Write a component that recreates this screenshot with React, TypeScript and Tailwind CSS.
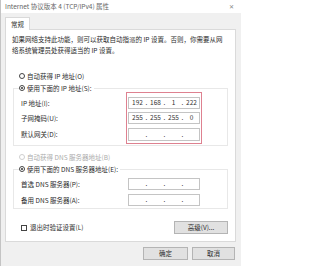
import React from 'react'

type RadioProps = { checked?: boolean; disabled?: boolean }

function Radio({ checked, disabled }: RadioProps) {
  return (
    <span
      className={
        disabled
          ? 'w-[6px] h-[6px] rounded-full border border-[#cfcfcf] bg-white flex items-center justify-center shrink-0'
          : 'w-[6px] h-[6px] rounded-full border border-[#444] bg-white flex items-center justify-center shrink-0'
      }
    >
      {checked && <span className="w-[2px] h-[2px] rounded-full bg-[#333]" />}
    </span>
  )
}

function IpField({ parts, tall }: { parts: string[]; tall?: boolean }) {
  return (
    <div
      className={
        tall
          ? 'h-[13px] w-[72px] border border-[#c4c4c4] bg-white flex items-center pl-[1px]'
          : 'h-[12px] w-[72px] border border-[#c4c4c4] bg-white flex items-center pl-[1px]'
      }
    >
      {parts.map((p, i) => (
        <React.Fragment key={i}>
          <span className="w-[15px] text-center">{p}</span>
          {i < 3 && <span className="w-[3px] text-center">.</span>}
        </React.Fragment>
      ))}
    </div>
  )
}

export default function App() {
  return (
    <div className="w-[241px] h-[266px] bg-[#f0f0f0] border-l border-[#c4c4c4] overflow-hidden text-[6.5px] text-[#2b2b2b] [font-family:'Noto_Sans_CJK_SC',sans-serif] flex flex-col">
      {/* 标题栏 */}
      <div className="h-[13px] bg-white flex items-center justify-between pl-[4px] pr-[7px] shrink-0">
        <span className="text-[#666] leading-none">Internet 协议版本 4 (TCP/IPv4) 属性</span>
        <span className="text-[#888] text-[6px] leading-none">✕</span>
      </div>

      {/* 选项卡 */}
      <div className="pt-[4px] pl-[4px] flex shrink-0">
        <div className="w-[25px] h-[13px] bg-white border border-b-0 border-[#d9d9d9] flex items-center justify-center leading-none -mb-[1px] relative z-10">
          常规
        </div>
      </div>

      <div className="ml-[4px] w-[231px] h-[213px] bg-white border border-[#dadada] shrink-0 flex flex-col">
        <p className="pt-[4px] pl-[6px] pr-[8px] leading-[11px]">
          如果网络支持此功能，则可以获取自动指派的 IP 设置。否则，你需要从网络系统管理员处获得适当的 IP 设置。
        </p>

        <label className="mt-[14px] ml-[13px] h-[12px] flex items-center gap-[2px] leading-none">
          <Radio />
          <span>自动获得 IP 地址(O)</span>
        </label>

        <fieldset className="mx-[7px] border border-[#e8e8e8] pb-[1px]">
          <legend className="ml-[5px] h-[12px] flex items-center gap-[2px] leading-none pr-[2px]">
            <Radio checked />
            <span>使用下面的 IP 地址(S):</span>
          </legend>
          <div className="flex">
            <div className="w-[112px] pl-[7px] flex flex-col leading-[12px]">
              <span className="mt-[3px] h-[12px]">IP 地址(I):</span>
              <span className="mt-[3px] h-[12px]">子网掩码(U):</span>
              <span className="mt-[4px] h-[13px]">默认网关(D):</span>
            </div>
            <div className="-mt-[2px] border border-[#de8190] pt-[4px] px-[1px] pb-[2px] flex flex-col gap-[3px] text-[#333]">
              <IpField parts={['192', '168', '1', '222']} />
              <IpField parts={['255', '255', '255', '0']} />
              <div className="mt-[1px]">
                <IpField parts={['', '', '', '']} tall />
              </div>
            </div>
          </div>
        </fieldset>

        <label className="mt-[5px] ml-[13px] h-[12px] flex items-center gap-[2px] leading-none text-[#ababab]">
          <Radio disabled />
          <span>自动获得 DNS 服务器地址(B)</span>
        </label>

        <fieldset className="mx-[7px] border border-[#e8e8e8] pb-[2px]">
          <legend className="ml-[5px] h-[12px] flex items-center gap-[2px] leading-none pr-[2px]">
            <Radio checked />
            <span>使用下面的 DNS 服务器地址(E):</span>
          </legend>
          <div className="flex">
            <div className="w-[113px] pl-[7px] flex flex-col leading-[12px]">
              <span className="mt-[3px] h-[12px]">首选 DNS 服务器(P):</span>
              <span className="mt-[4px] h-[12px]">备用 DNS 服务器(A):</span>
            </div>
            <div className="pt-[3px] pl-[1px] flex flex-col gap-[4px]">
              <IpField parts={['', '', '', '']} />
              <IpField parts={['', '', '', '']} />
            </div>
          </div>
        </fieldset>

        <div className="mt-[12px] ml-[15px] mr-[7px] flex items-center justify-between">
          <label className="flex items-center gap-[3px] leading-none">
            <span className="w-[6px] h-[6px] border border-[#444] bg-white" />
            <span>退出时验证设置(L)</span>
          </label>
          <button className="w-[54px] h-[13px] bg-[#e1e1e1] border border-[#b4b4b4] leading-none">
            高级(V)...
          </button>
        </div>
      </div>

      <div className="mt-[5px] ml-[142px] flex gap-[4px]">
        <button className="w-[45px] h-[13px] bg-[#e1e1e1] border border-[#b4b4b4] leading-none">确定</button>
        <button className="w-[43px] h-[13px] bg-[#e1e1e1] border border-[#b4b4b4] leading-none">取消</button>
      </div>
    </div>
  )
}
